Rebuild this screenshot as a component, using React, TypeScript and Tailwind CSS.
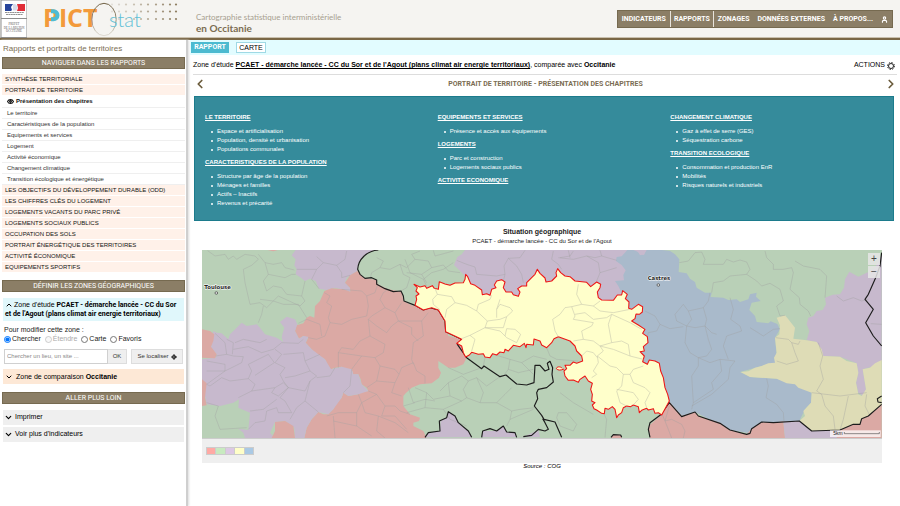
import React, { useState } from "react";
import { ChevronDown, ChevronLeft, ChevronRight, ChevronUp, Eye, LocateFixed, User } from "lucide-react";

type Chapter = { title: string; items: string[] };

const subPages = [
    "Le territoire",
    "Caractéristiques de la population",
    "Equipements et services",
    "Logement",
    "Activité économique",
    "Changement climatique",
    "Transition écologique et énergétique",
];

const reports = [
    "LES OBJECTIFS DU DÉVELOPPEMENT DURABLE (ODD)",
    "LES CHIFFRES CLÉS DU LOGEMENT",
    "LOGEMENTS VACANTS DU PARC PRIVÉ",
    "LOGEMENTS SOCIAUX PUBLICS",
    "OCCUPATION DES SOLS",
    "PORTRAIT ÉNERGÉTIQUE DES TERRITOIRES",
    "ACTIVITÉ ÉCONOMIQUE",
    "EQUIPEMENTS SPORTIFS",
];

const columns: Chapter[][] = [
    [
        {
            title: "LE TERRITOIRE",
            items: ["Espace et artificialisation", "Population, densité et urbanisation", "Populations communales"],
        },
        {
            title: "CARACTERISTIQUES DE LA POPULATION",
            items: ["Structure par âge de la population", "Ménages et familles", "Actifs – Inactifs", "Revenus et précarité"],
        },
    ],
    [
        { title: "EQUIPEMENTS ET SERVICES", items: ["Présence et accès aux équipements"] },
        { title: "LOGEMENTS", items: ["Parc et construction", "Logements sociaux publics"] },
        { title: "ACTIVITE ECONOMIQUE", items: [] },
    ],
    [
        { title: "CHANGEMENT CLIMATIQUE", items: ["Gaz à effet de serre (GES)", "Séquestration carbone"] },
        {
            title: "TRANSITION ECOLOGIQUE",
            items: ["Consommation et production EnR", "Mobilités", "Risques naturels et industriels"],
        },
    ],
];

const legend = ["bg-[#ffaaa5]", "bg-[#c8eac0]", "bg-[#dcc8e4]", "bg-[#ffffc8]", "bg-[#aac9e4]"];

const StateLogo: React.FC = () => (
    <svg viewBox="0 0 27 38" className="h-[38px] w-[27px]" role="img" aria-label="Préfet de la région Occitanie">
        <rect x="1" y="0" width="26" height="37.5" fill="#fff" stroke="#8d8d8d" strokeWidth="1" />
        <path d="M1 18.5H27" stroke="#8d8d8d" />
        <path d="M5 4h8l-2 3 1 3-1 1H5z" fill="#27449b" />
        <path d="M17 4h8v7h-8l1-3z" fill="#e12d38" />
        <path d="M13 4.500c2-1 4 0 4 2l.8 1.500-1 .5v2h-4z" fill="#d5dbea" />
        <path d="M5 12.500h19M6 14.500h17" stroke="#777" strokeWidth=".8" strokeDasharray="2 .4" />
        <g fontFamily="Liberation Serif, serif" fontSize="3" fill="#555" textAnchor="middle">
            <text x="14" y="25">PREFET</text>
            <text x="14" y="28.500">DE LA REGION</text>
            <text x="14" y="32">OCCITANIE</text>
        </g>
    </svg>
);

const dotColumns = [112, 119, 126, 134, 141, 148, 156, 163, 170, 176];

const PictoLogo: React.FC = () => (
    <svg viewBox="42 0 140 38" className="h-[38px] w-[140px]" role="img" aria-label="Picto stat">
        <defs>
            <linearGradient id="ring" x1="0" y1="0" x2="0" y2="1">
                <stop offset="0" stopColor="#6f6043" />
                <stop offset=".6" stopColor="#a39a86" />
                <stop offset="1" stopColor="#dedad2" />
            </linearGradient>
        </defs>
        {dotColumns.map((x, i) =>
            [4.5, 11.5, 19].map((y) => (
                <circle key={`${x}-${y}`} cx={x} cy={y} r={1.1} fill="#857454" opacity={0.15 + i * 0.085} />
            )),
        )}
        <g fontFamily="'Open Sans', sans-serif" fontSize="25" fontWeight="700" fill="#f39a3b">
            <text x="43" y="27">P</text>
            <text x="59" y="27">I</text>
            <text x="67" y="27">C</text>
            <text x="83" y="27">T</text>
        </g>
        <path d="M51 11.200h2.500a4 4 0 0 1 0 8H51" fill="none" stroke="#4fbcd3" strokeWidth="4" />
        <ellipse cx="104" cy="19.500" rx="12.200" ry="16.200" fill="none" stroke="url(#ring)" strokeWidth="1" />
        <text x="109" y="27" fontFamily="Lato, sans-serif" fontSize="20" fontWeight="300" fill="#5fc0d6">
            stat
        </text>
    </svg>
);

const Gear: React.FC = () => (
    <svg viewBox="0 0 16 16" className="size-2" aria-hidden="true">
        <circle cx="8" cy="8" r="7" fill="none" stroke="#222" strokeWidth="2" strokeDasharray="2.75 2.75" />
        <circle cx="8" cy="8" r="5" fill="none" stroke="#222" strokeWidth="2" />
    </svg>
);

const GREEN = "#b9d0b7";
const PURPLE = "#c7b9cd";
const RED = "#dba9a4";
const BLUE = "#a9bacb";
const SAND = "#dedcb6";

const SituationMap: React.FC = () => (
    <svg viewBox="21 32 2040 564" className="block h-auto w-full" role="img" aria-label="Carte de situation">
        <rect x="21" y="32" width="2040" height="564" fill={GREEN} />

        {/* intercommunalités de l'est */}
        <g transform="translate(1335 0)">
            <path fill={BLUE} d="M-100 32H20L50 30 90 35 105 45 118 60 116 98 140 102 150 118 165 128 170 145 195 160 215 160 212 173 250 175 265 182 290 180 300 188 325 180 330 165 350 160 348 172 362 185 335 190 328 212 345 230 350 248 385 252 392 246 412 254 420 270 405 295 410 350 405 372 365 380 300 398 330 413 410 418 475 437 515 460 513 490 495 510 478 545 400 550 365 548 330 582 270 572 165 518 125 530 88 487 0 480-60 200Z" />
            <path fill={PURPLE} d="M-20 32H20L12 45 0 48-5 38Z" />
            <path fill={PURPLE} d="M500 303 508 275 500 255 505 235 520 230 530 215 548 212 558 195 555 175 578 166 600 165 612 145 615 120 628 97 655 112 685 98 705 85 725 45V365L705 380 668 390 678 450 670 470 655 460 648 430 655 400 650 372 600 352 550 350 530 308Z" />
            <path fill={SAND} d="M302 398 325 396 345 385 365 380 385 372 405 370 402 355 410 340 405 295 418 285 420 258 410 235 435 228 445 240 465 265 460 298 500 303 530 308 545 330 550 350 600 352 620 365 650 372 655 400 648 430 655 465 665 470 678 450 668 390 690 385 705 372 725 362V500L685 530 660 555 600 572 515 575 478 545 495 530 490 515 513 490 515 460 475 445 465 435 440 432 410 418 330 413Z" />
            <path fill={RED} d="M88 487 125 530 165 518 175 530 240 550 270 572 320 585 335 568 365 548 400 550 430 546 435 596H30L26 560 60 530Z" />
            <path fill={PURPLE} d="M430 546 478 545 515 575 600 572 590 596H435Z" />
            <path fill={RED} d="M600 572 640 555 660 555 665 538 685 530 725 495V596H590Z" />
            <path fill="none" stroke="#9f9f9f" strokeWidth="1.500" opacity=".75" d="M118 70 145 65 165 40 185 38 195 60 190 75 250 75 260 60 280 68 300 62 320 68 330 90 320 105 270 110 250 125 220 130 215 160M320 105 350 125 365 140 390 132 420 150 430 185 410 200 420 230 435 228M375 35 380 55 400 75 400 90 430 90 455 85 460 100 450 150 478 175 480 195 505 215 512 230M465 65 490 80 540 90 560 110 555 175M210 160 205 185 190 205 145 215 130 195 105 225 110 245 140 260 165 265 195 260 215 280 230 285M190 205 200 240 195 260M145 215 155 240 140 260M15 215 45 230 60 255 50 275 25 280 20 300M60 255 90 268 130 262M140 260 135 310 150 340 175 355 200 350 215 330 205 300 195 260M175 355 175 380 155 410 160 490 155 510M175 355 210 370 240 360 245 395 215 430 220 450 160 490M240 360 285 365 270 385 265 420 215 465 155 500M270 175 280 210 272 240 300 260 305 275 260 290 250 320 265 360M330 265 370 290 400 270 420 268M380 418 385 440 378 475 410 495 430 520 432 546M407 295 445 300 455 310 475 315 480 305M455 310 465 340 475 365 440 375 410 365M535 310 548 350 540 380 550 420 530 455 545 465M515 460 600 470 680 460M545 465 555 500 580 530 585 570M625 470 610 540 600 572M680 465 675 500 690 530M590 170 610 185 640 175 665 185 685 180M692 253 725 255M60 510 75 545 95 540 125 555 135 575 130 596M88 500 75 545 95 596" />
        </g>

        {/* intercommunalités du nord */}
        <g transform="translate(435 15)">
            <path fill={PURPLE} d="M375 17 365 30 352 38 342 62 355 75 372 92 420 190 820 190 845 145 835 125 825 110 852 108 850 92 857 78 845 62 828 50 830 38 845 36 862 17Z" />
            <path fill={PURPLE} d="M888 17H918L912 32 900 30Z" />
            <path fill="none" stroke="#a2a2a2" strokeWidth="1.500" opacity=".8" d="M350 48 380 60 405 68 410 90 470 95 495 90 492 65 505 42 540 40 555 18M495 90 490 110M505 42 530 65 545 90 550 115M640 20 635 45 655 60 665 75M655 40 700 45 740 35 765 40 785 35 830 48M660 40 690 35 700 20M780 18 785 35M740 35 775 55 780 85 770 110M780 85 830 70M685 18 690 40M110 40 130 50 120 70 150 75 180 60 200 70 225 45 215 30 240 20M120 70 95 85 90 105M180 60 190 90 210 100 200 130 165 150M225 45 265 50 275 70 245 90 200 85M275 70 310 62 325 80 360 85M245 90 260 115M280 18 285 35 340 20" />
        </g>

        {/* intercommunalités de l'ouest */}
        <path fill={PURPLE} d="M302 32 290 48 302 60 298 78 305 90 302 105 318 115 330 125 345 118 362 125 372 148 395 152 420 145 440 150 466 157 465 145 450 130 455 115 487 95 490 70 505 50 530 35 550 32Z" />
        <path fill={RED} d="M487 95 505 115 545 122 548 135 580 150 620 157 625 185 655 200 735 212 760 290 800 300 815 355 805 375 780 385 760 385 745 375 730 365 730 385 738 400 732 415 710 432 675 435 650 445 632 462 625 470 625 500 645 525 675 535 672 545 655 550 655 560 685 575 695 596H328L335 565 350 540 370 518 385 525 400 525 415 510 425 490 440 475 445 460 460 470 490 465 500 458 520 455 515 445 500 435 497 420 490 405 475 405 470 390 455 390 440 382 420 385 408 390 400 380 390 360 365 345 350 330 332 310 340 295 325 290 312 298 300 275 305 258 325 252 335 235 345 230 358 235 360 200 375 185 388 155 410 147 445 150 466 157 465 145 450 130 465 108Z" />
        <path fill={PURPLE} d="M21 360 62 355 65 345 48 325 55 275 65 280 80 282 100 300 105 285 125 265 140 250 155 260 185 255 195 265 210 285 245 295 265 308 260 295 262 285 268 265 255 248 275 232 300 240 307 255 300 275 312 298 325 290 340 292 332 310 350 330 390 360 408 390 440 382 470 390 475 405 490 405 500 435 520 455 490 465 460 470 445 460 440 475 415 510 400 525 370 518 350 540 335 565 328 596H300L298 565 270 545 240 548 225 580 240 596H150L145 580 130 568 160 572 165 520 130 505 132 480 115 490 75 500 35 495 21 420Z" />
        <path fill={RED} d="M21 270 45 275 58 285 55 305 48 322 65 345 60 357 21 355ZM21 420 35 432 30 475 35 498 21 500ZM240 548 270 545 295 560 300 596H230L240 575ZM218 32H248L235 36Z" />
        <path fill="none" stroke="#a2a2a2" strokeWidth="1.500" opacity=".75" d="M38 34 60 50 90 45 100 60 115 50 125 60 150 45 180 50 190 60 170 78 145 90 150 130 165 195 195 190 215 205 250 170M190 45 210 70 235 75 260 70 270 85 298 92M210 70 220 105 205 125 215 155 235 140 260 145 275 165 320 170 330 185 315 200 250 170M220 105 270 115 290 105 302 105M205 200 200 225 190 250M195 180 235 185 265 195 310 195 335 235M330 125 320 170M365 52 385 70 425 78 450 60 455 35M372 148 350 120 365 90 385 70M425 78 440 100 440 115 465 108M305 90 365 90M60 282 90 310 95 345 115 350 145 352 140 370 90 395 35 395M95 300 115 310 112 345M120 310 145 300 195 310 215 300M115 330 160 322 200 340 235 330 260 310M62 350 95 345M35 365 90 375 90 395 35 435 45 440 80 415 105 425 160 418 170 395 160 375 220 345 238 370 180 408M160 418 180 435 170 455 130 475M170 455 240 445 265 430 280 445 250 470 230 460 240 445M240 370 270 385 255 405 265 425 280 445 330 455 345 425 365 410 345 395 300 410 270 415M240 330 260 345 240 370M260 310 310 312 325 300M265 345 325 340 330 365 345 395M330 365 375 345M345 425 330 485 370 518M330 485 305 505 285 540M280 445 255 475 270 485 290 520 250 520 245 505 215 515 210 545 180 550 160 570M245 480 205 510 165 515M420 385 405 410 365 415M470 390 465 440 445 460M35 490 70 500 60 530 75 570 155 565M340 295 365 300 390 290 405 250 400 235 410 200 395 190 405 170 388 160M310 252 335 240 375 255 380 290M405 250 440 255 470 240 515 230 520 200 515 170 540 160 548 135M515 170 500 155 440 150M520 240 530 230 570 205 555 180 565 160 580 150M570 205 600 220 610 245 590 260 575 280 545 260 520 240M610 245 625 245 680 245 700 220M600 220 620 190M680 245 685 290 655 310 650 360 655 375M610 245 650 265 650 285 670 305M520 240 525 290 570 315 565 340 540 355 500 350 430 340 440 325 475 330 495 305 525 290M430 340 430 385M500 350 470 390M540 355 555 380 600 390 612 405 600 430 590 460 620 470M515 445 545 425 555 380M612 405 620 385 655 370 665 395 690 410 690 432M545 425 600 430M520 455 545 465 570 500 600 500 615 515 645 525M490 465 500 490 485 520 430 520 395 530M545 465 500 490 510 520 550 530 600 550 640 580M415 545 485 560 530 590M485 520 485 560M550 530 545 575 570 596M570 500 560 530 600 530 635 570M415 530 420 596M640 445 655 490 690 480 720 485M625 500 660 490" />

        {/* zone d'étude */}
        <g transform="translate(615 60)">
            <path fill={PURPLE} d="M75 534 85 520 120 515 122 485 140 475 145 457 165 470 175 490 205 515 215 534ZM245 534 248 515 290 515 310 500 320 518 345 520 350 534ZM352 534 370 532 415 513 420 534Z" />
            <path fill={RED} d="M633 536 640 526 662 527 665 536Z" />
            <path fill="none" stroke="#9f9f9f" strokeWidth="1.500" opacity=".7" d="M145 325 190 345 245 325M120 395 145 370 185 350 205 365 230 355 260 380 300 352M145 370 150 410 185 425 200 415 190 390 205 365M45 385 80 400 100 420 150 410M80 400 75 445 20 460M75 445 130 450 185 425M130 450 150 480 200 500M230 355 250 400 240 430 200 415M240 430 290 430 315 405 335 385M290 430 335 455 330 480 400 450M335 455 360 450 405 445M330 480 320 500M250 320 255 295 280 285 330 300 325 330 355 340 400 330M325 330 310 350M330 300 365 310 400 345M365 310 400 290 440 300M475 460 500 460 530 495 520 515 480 500 470 475ZM575 400 610 460 620 480 615 534M480 400 520 430 580 465M440 265 450 290 470 300 535 305M15 0 30 40 70 60 95 40 130 30 160 10M70 60 80 80" />
            <path fill="none" stroke="#1d1d1d" strokeWidth="3.500" strokeLinejoin="round" d="M-65-28C-100-25-125 0-127 30L-120 45-105 57-85 55-70 62-70 75-45 88-20 97 3 95 10 110 12 125 45 138 70 152 90 145 115 152 135 185 137 217 185 240 172 255 200 295 245 328 252 320 300 352 318 347 350 374 380 377 402 370 405 318 420 318 435 335 447 330 442 312 450 306 458 325 456 345 460 368 440 385 415 390 410 400 413 418 403 440 425 468 432 480 465 488 485 534M428 478 435 490 445 510 435 515 415 510 395 528 370 532M75 534 85 520 120 515 118 485 140 475 145 457 165 470 175 490 205 515 215 534M245 534 248 515 270 508 290 515 310 500 320 518 345 520 350 534M633 534 640 526 662 527 665 534M808 430 780 468 750 490 745 510 750 534M808 430 845 472 885 458 895 470 960 492 990 512 1040 525 1050 522 1055 508 1085 488 1120 490 1198 485 1235 515 1320 512 1360 495 1380 495 1385 478 1405 470 1445 435M1445 410 1432 418 1434 428 1445 430M1445-20 1440 20 1425 60 1405 105 1395 120 1420 150 1397 190 1420 230 1445 260" />
            <path fill="#ffffcb" stroke="#ee1616" strokeWidth="3.200" strokeLinejoin="round" d="M42 75 60 83 75 79 80 87 97 79 103 87 115 90 118 67 135 74 150 78 165 71 190 70 195 60 197 45 203 52 212 73 225 78 245 92 247 106 260 103 270 108 275 90 288 85 283 77 290 65 305 61 315 68 310 85 318 98 335 98 340 106 355 111 360 98 353 88 365 80 380 80 380 70 395 55 405 45 412 30 420 42 435 56 438 68 455 65 470 50 468 40 473 28 482 40 495 50 510 52 525 65 560 69 572 82 590 68 602 75 600 85 592 98 595 115 605 122 640 123 652 107 665 107 668 94 682 105 676 118 687 128 686 147 695 150 715 135 728 142 727 158 718 165 708 164 705 178 695 185 715 197 735 210 728 222 742 232 744 250 730 262 733 275 720 277 733 290 728 307 742 315 748 302 765 305 778 312 782 335 790 355 795 385 803 405 808 425 785 467 775 460 765 462 760 448 745 452 740 447 725 453 718 460 715 442 700 437 692 442 680 440 670 445 665 460 655 467 650 475 645 450 637 442 625 450 615 447 613 463 605 462 590 452 582 448 577 437 585 430 575 425 577 405 572 390 577 372 565 365 555 350 540 360 535 369 520 362 505 363 495 350 492 335 500 328 495 318 510 318 520 308 530 312 548 305 545 290 530 275 525 260 510 245 475 232 462 238 455 250 440 265 425 257 420 245 402 239 400 257 380 255 378 265 373 252 360 262 340 258 325 275 315 270 312 280 300 278 290 287 278 283 270 295 255 293 250 283 235 285 215 279 208 287 197 293 190 280 185 260 170 252 185 240 137 217 135 185 115 152 95 145 70 152 45 138 50 120 48 110 57 104 48 95 52 85Z" />
            <path fill="#ffffcb" stroke="#ee1616" strokeWidth="3" d="M487 327C480 320 470 322 469 328 474 334 483 333 492 329" />
            <path fill="none" stroke="#c8c8ae" strokeWidth="1.800" d="M105 87 112 105 98 120 100 135 120 152M112 105 155 112 165 130 140 150 135 175M165 130 200 138 230 155 262 185 255 205 210 228 185 238M230 155 235 135 270 120 275 108M262 185 300 180 320 172 338 155 330 145 300 135 290 150 290 175M290 150 300 120M255 205 300 215 320 235 350 250 362 225 345 210 320 208 315 230M320 172 310 205 255 205M210 228 225 240 215 275M535 75 530 105 545 135 515 142 495 145 480 165 458 180 465 215 475 232M515 142 525 170 520 180 580 190 575 200 545 215 550 240 520 245M545 135 580 140 600 125M580 140 600 155 640 160 690 150M525 165 555 160 580 180 620 175 635 165 625 195 635 250 600 260 580 245 550 240M635 165 690 190 725 210M635 250 665 245 685 255 690 290 730 300M600 260 610 275 592 290 595 310 580 335 590 345 575 355M545 290 560 275 580 280 592 295M592 290 630 320 650 325 670 345 690 345 700 330 730 320M670 345 665 380 650 395 660 430 680 440M650 390 700 400 715 420 700 437M690 345 700 370 735 385 750 400 735 430 740 445M600 260 640 270 690 290" />
        </g>

        <g fontFamily="'DejaVu Sans', sans-serif" fontSize="16" fontWeight="700" fill="#222" stroke="#fff" strokeWidth="3" paintOrder="stroke">
            <text x="28" y="149">Toulouse</text>
            <text x="1358" y="123">Castres</text>
        </g>
        <circle cx="64" cy="161" r="4" fill="#ddd" stroke="#444" strokeWidth="2" />
        <circle cx="1390" cy="137" r="4" fill="#ddd" stroke="#444" strokeWidth="2" />

        <rect x="1905" y="573" width="152" height="20" fill="#fff" opacity=".75" />
        <text x="1915" y="588" fontFamily="'Liberation Sans', sans-serif" fontSize="15" fill="#222">5km</text>
        <path d="M1948 578v5h105v-5" fill="none" stroke="#555" strokeWidth="2" />
    </svg>
);

const SectionTitle: React.FC<{ children: React.ReactNode }> = ({ children }) => (
    <h2 className="flex h-3 items-center justify-center border border-[#766a50] bg-[#8b7e66] font-['Roboto',sans-serif] text-[7px] leading-none text-white">
        {children}
    </h2>
);

const Sidebar: React.FC = () => {
    const [mode, setMode] = useState("Chercher");
    const [place, setPlace] = useState("");

    return (
        <aside className="w-[188px] shrink-0 border-r-2 border-[#cfcfcf] pl-[2px] pr-[1px] shadow-[1px_0_2px_#ddd]">
            <h1 className="pt-1 pl-px text-[8px] leading-[9px] text-[#7b6d52]">Rapports et portraits de territoires</h1>
            <div className="mt-1">
                <SectionTitle>NAVIGUER DANS LES RAPPORTS</SectionTitle>
            </div>

            <nav className="mt-[5px] text-[#111]">
                {["SYNTHÈSE TERRITORIALE", "PORTRAIT DE TERRITOIRE"].map((label) => (
                    <a key={label} href="#" className="block h-[11px] border-b border-white bg-[#fff1e9] pl-[3px] text-[6px] leading-[11px]">
                        {label}
                    </a>
                ))}
                <a href="#" className="flex h-[12px] items-center gap-[2px] border-b border-[#efefef] pl-[5px] text-[6px] font-bold leading-[11px]">
                    <Eye className="size-[7px]" strokeWidth={4} />
                    Présentation des chapitres
                </a>
                {subPages.map((label) => (
                    <a key={label} href="#" className="block h-[11px] border-b border-[#efefef] pl-[5px] text-[6px] leading-[11px] text-[#333]">
                        {label}
                    </a>
                ))}
                {reports.map((label) => (
                    <a key={label} href="#" className="block h-[11px] border-b border-white bg-[#fff1e9] pl-[3px] text-[6px] leading-[11px]">
                        {label}
                    </a>
                ))}
            </nav>

            <div className="mt-[7px]">
                <SectionTitle>DÉFINIR LES ZONES GÉOGRAPHIQUES</SectionTitle>
            </div>
            <div className="mx-px mt-[6px] bg-[#e0f7fb] py-[2px] pl-[2px] text-[7px] leading-[9px]">
                <div className="flex items-center gap-px">
                    <ChevronUp className="size-2" strokeWidth={3} />
                    <span>
                        Zone d'étude <b className="font-['Roboto',sans-serif]">PCAET - démarche lancée - CC du Sor</b>
                    </span>
                </div>
                <b className="block font-['Roboto',sans-serif]">et de l'Agout (plans climat air energie territoriaux)</b>
            </div>

            <fieldset className="mt-1 pl-[2px] text-[7px] text-[#222]">
                <legend className="leading-[9px]">Pour modifier cette zone :</legend>
                <div className="flex items-center gap-1 leading-[10px]">
                    {["Chercher", "Étendre", "Carte", "Favoris"].map((label) => (
                        <label key={label} className={`flex items-center gap-px ${label === "Étendre" ? "text-[#aaa]" : ""}`}>
                            <input
                                type="radio"
                                name="mode"
                                className="size-[7px]"
                                checked={mode === label}
                                disabled={label === "Étendre"}
                                onChange={() => setMode(label)}
                            />
                            {label}
                        </label>
                    ))}
                </div>
            </fieldset>
            <div className="mt-[5px] flex h-[15px] pl-[2px] pr-[2px] text-[6px] text-[#333]">
                <input
                    type="text"
                    aria-label="Chercher un lieu"
                    placeholder="Chercher un lieu, un site ..."
                    value={place}
                    onChange={(e) => setPlace(e.target.value)}
                    className="min-w-0 flex-1 border border-[#d0d0d0] px-[2px] placeholder:text-[#888]"
                />
                <button type="button" className="w-[19px] border border-l-0 border-[#ddd] bg-[#efefef]">OK</button>
                <button type="button" className="ml-1 flex w-[52px] items-center justify-center gap-[2px] border border-[#ddd] bg-[#efefef]">
                    Se localiser
                    <LocateFixed className="size-[6px]" strokeWidth={4} />
                </button>
            </div>
            <button type="button" className="mx-px mt-[5px] flex h-[15px] w-[181px] items-center gap-[3px] bg-[#fde8d6] pl-[2px] text-[7px] leading-none">
                <ChevronDown className="size-2" strokeWidth={3} />
                <span>
                    Zone de comparaison <b>Occitanie</b>
                </span>
            </button>

            <div className="mt-2">
                <SectionTitle>ALLER PLUS LOIN</SectionTitle>
            </div>
            <div className="mx-px mt-[6px] flex flex-col gap-[2px] text-[7px]">
                {["Imprimer", "Voir plus d'indicateurs"].map((label) => (
                    <button key={label} type="button" className="flex h-[15px] items-center gap-[2px] bg-[#efefef] pl-px">
                        <ChevronDown className="size-[9px]" strokeWidth={3} />
                        {label}
                    </button>
                ))}
            </div>
        </aside>
    );
};

const App: React.FC = () => (
    <div className="flex min-h-screen flex-col bg-white font-['Liberation_Sans',Arial,sans-serif] text-black">
        <header className="flex h-10 shrink-0 border-b-2 border-[#7a6746] bg-[#f5f4f1] shadow-[inset_0_-1px_0_#c9c0ae]">
            <StateLogo />
            <div className="ml-[15px]">
                <PictoLogo />
            </div>
            <div className="ml-[14px] pt-[11px] font-['Lato',sans-serif]">
                <p className="text-[8px] leading-[12px] text-[#a79f90]">Cartographie statistique interministérielle</p>
                <p className="text-[10px] font-bold leading-[10px] text-[#7b6d52]">en Occitanie</p>
            </div>
            <nav className="mt-[10px] mr-[7px] ml-auto flex h-[18px] items-center border border-[#766a50] bg-[#8b7e66] font-['Roboto',sans-serif] text-[7px] font-bold text-white">
                <a href="#" className="flex h-full items-center border-r border-[#e8e4dc] px-1">INDICATEURS</a>
                <a href="#" className="flex h-full items-center border-r border-[#e8e4dc] px-[3px]">RAPPORTS</a>
                <a href="#" className="px-1">ZONAGES</a>
                <a href="#" className="px-1">DONNÉES EXTERNES</a>
                <a href="#" className="px-1">À PROPOS...</a>
                <a href="#" aria-label="Compte" className="px-1">
                    <User className="size-[7px]" strokeWidth={4} />
                </a>
            </nav>
        </header>

        <div className="flex flex-1">
            <Sidebar />

            <main className="min-w-0 flex-1 pl-[2px]">
                <div className="flex h-[15px] items-center gap-[7px] bg-[#e2fcff] pl-px text-[7px] leading-none">
                    <button type="button" className="h-[11px] w-[38px] bg-[#4cbad0] font-['Roboto',sans-serif] font-bold text-white">RAPPORT</button>
                    <button type="button" className="h-[11px] w-[30px] border border-[#9fd9e5] bg-white">CARTE</button>
                </div>

                <div className="mr-[3px] ml-[3px] flex h-5 items-center justify-between border-b border-[#ddd] pt-[2px] text-[7px]">
                    <p>
                        Zone d'étude{" "}
                        <a href="#" className="font-bold underline">
                            PCAET - démarche lancée - CC du Sor et de l'Agout (plans climat air energie territoriaux)
                        </a>
                        , comparée avec <b>Occitanie</b>
                    </p>
                    <button type="button" className="flex items-center gap-[2px] pr-[2px]">
                        ACTIONS
                        <Gear />
                    </button>
                </div>

                <div className="mr-[2px] ml-[3px] flex h-[21px] items-center justify-between pb-[3px] text-[#6b5c3c]">
                    <button type="button" aria-label="Chapitre précédent">
                        <ChevronLeft className="size-[14px]" strokeWidth={3} />
                    </button>
                    <h2 className="font-['Roboto',sans-serif] text-[7px] font-bold text-[#7b6d52]">
                        PORTRAIT DE TERRITOIRE - PRÉSENTATION DES CHAPITRES
                    </h2>
                    <button type="button" aria-label="Chapitre suivant">
                        <ChevronRight className="size-[14px]" strokeWidth={3} />
                    </button>
                </div>

                <section className="mr-[6px] ml-1 grid min-h-[125px] grid-cols-3 border border-[#1c7b8c] bg-[#358b9b] pt-4 text-[6px] leading-[9px] text-white">
                    {columns.map((chapters, i) => (
                        <div key={i} className="pl-[10px]">
                            {chapters.map((chapter) => (
                                <div key={chapter.title} className="mb-1">
                                    <a href="#" className="block font-bold underline">{chapter.title}</a>
                                    {chapter.items.length > 0 && (
                                        <ul className="mt-[5px] pl-[6px]">
                                            {chapter.items.map((item) => (
                                                <li key={item} className="flex items-center gap-1 before:size-[2px] before:rounded-full before:bg-white">
                                                    {item}
                                                </li>
                                            ))}
                                        </ul>
                                    )}
                                </div>
                            ))}
                        </div>
                    ))}
                </section>

                <section className="mr-[18px] ml-3 pt-[6px]">
                    <h3 className="text-center text-[7px] font-bold leading-[10px] text-[#222]">Situation géographique</h3>
                    <p className="text-center text-[6px] leading-[9px] text-[#222]">PCAET - démarche lancée - CC du Sor et de l'Agout</p>
                    <div className="relative mt-1 border-b border-[#ccc]">
                        <SituationMap />
                        <div className="absolute top-[3px] right-[2px] flex flex-col gap-px text-[10px] leading-none text-[#444]">
                            <button type="button" aria-label="Zoom avant" className="size-3 bg-[#e6e6e6]/85">+</button>
                            <button type="button" aria-label="Zoom arrière" className="size-3 bg-[#e6e6e6]/85">−</button>
                        </div>
                    </div>
                    <div className="h-6 bg-[#efefef] pt-2 pl-1">
                        <div className="flex h-2 w-12 gap-px border border-[#ccc] bg-[#ccc]">
                            {legend.map((color) => (
                                <span key={color} className={`flex-1 ${color}`} />
                            ))}
                        </div>
                    </div>
                    <p className="text-center text-[6px] italic leading-[6px]">Source : COG</p>
                </section>
            </main>
        </div>
    </div>
);

export default App;
